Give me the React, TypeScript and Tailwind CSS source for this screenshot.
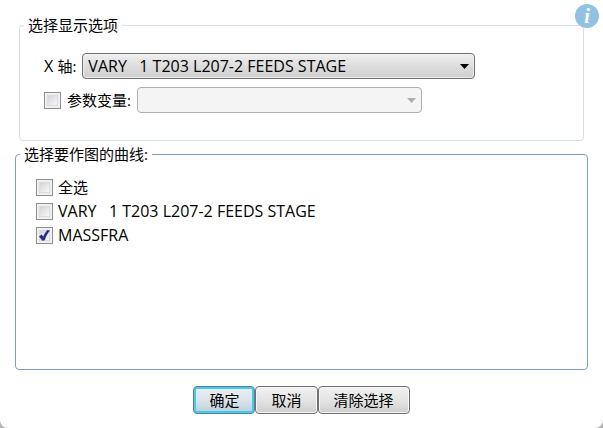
import { useState } from "react";
import type { ReactNode, SelectHTMLAttributes } from "react";

const VARY = "VARY\u00a0\u00a0\u00a01 T203 L207-2 FEEDS STAGE";

type CheckProps = {
  id: string;
  checked: boolean;
  onChange: (value: boolean) => void;
};

function CheckBox({ id, checked, onChange }: CheckProps) {
  return (
    <span className="relative grid size-[17px] shrink-0 place-items-center border border-[#8e8f8f] bg-[#f0f0f0]">
      <input
        id={id}
        type="checkbox"
        checked={checked}
        onChange={(e) => onChange(e.target.checked)}
        className="size-[11px] appearance-none border border-[#d8dadd] bg-linear-to-br from-[#d0d4dc] to-[#f8f8f8]"
      />
      {checked && (
        <svg viewBox="0 0 11 11" className="pointer-events-none absolute size-[11px]" aria-hidden="true">
          <path d="M0 6.4 L2.6 4.4 L4.2 6.6 C5.4 4 6.8 1.6 8.4 0 L11 0.6 C8.8 3 7 6.4 5.8 10.2 L3.4 10.8 Z" fill="#2a2f83" />
        </svg>
      )}
    </span>
  );
}

type ComboProps = SelectHTMLAttributes<HTMLSelectElement> & { children?: ReactNode };

function Combo({ children, className, disabled, ...rest }: ComboProps) {
  return (
    <span className={`relative flex h-[26px] min-w-0 ${className}`}>
      <select
        disabled={disabled}
        className="w-full appearance-none rounded-[4px] border border-[#707070] bg-linear-to-b from-[#f0f0f0] from-0% via-[#dddddd] via-50% to-[#cfcfcf] pr-6 pl-[5px] text-base text-black shadow-[inset_0_0_0_1px_#f3f3f3cc] disabled:border-[#adb2b5] disabled:bg-[#f4f4f4] disabled:bg-none disabled:opacity-100"
        {...rest}
      >
        {children}
      </select>
      <svg
        viewBox="0 0 9 5"
        className={`pointer-events-none absolute top-[11px] right-[6px] h-[5px] w-[9px] ${disabled ? "fill-[#adadad]" : "fill-black"}`}
        aria-hidden="true"
      >
        <path d="M0 0 H9 L4.5 5 Z" />
      </svg>
    </span>
  );
}

function PushButton({ children, primary }: { children: ReactNode; primary?: boolean }) {
  return (
    <button
      type="button"
      className={`h-7 rounded-[4px] border px-[15px] ${
        primary
          ? "border-[#5f7f8c] bg-linear-to-b from-[#ebf0f3] from-0% via-[#dae4ea] via-50% to-[#bccfdc] shadow-[inset_0_0_0_2px_#3fcbf5]"
          : "border-[#707070] bg-linear-to-b from-[#f2f2f2] from-0% via-[#e4e4e4] via-50% to-[#cfcfcf] shadow-[inset_0_0_0_1px_#f7f7f7]"
      }`}
    >
      {children}
    </button>
  );
}

export default function App() {
  const [param, setParam] = useState(false);
  const [curves, setCurves] = useState([
    { id: "all", label: "全选", checked: false },
    { id: "vary", label: VARY, checked: false },
    { id: "massfra", label: "MASSFRA", checked: true },
  ]);

  const toggle = (id: string, checked: boolean) =>
    setCurves((list) => list.map((c) => (c.id === id || id === "all" ? { ...c, checked } : c)));

  return (
    <div className="min-h-screen bg-[#b4b4b4] font-['Open_Sans','Noto_Sans_CJK_SC',sans-serif] text-[15px] leading-5 text-black">
      <main className="relative flex min-h-screen flex-col rounded-b-[8px] bg-white px-[15px] pt-[15px] pb-[14px]">
        <fieldset className="mx-1 rounded-[4px] border border-[#d5dfe5] px-6 pb-[27px]">
          <legend className="-ml-5 px-1">选择显示选项</legend>
          <div className="flex flex-col gap-2 pt-[18px]">
            <div className="flex items-center gap-[6px]">
              <label htmlFor="x-axis" className="shrink-0 text-base leading-5">
                X <span className="text-[15px]">轴:</span>
              </label>
              <Combo id="x-axis" className="w-[393px]">
                <option>{VARY}</option>
              </Combo>
            </div>
            <div className="flex items-center gap-[6px]">
              <CheckBox id="param" checked={param} onChange={setParam} />
              <label htmlFor="param" className="shrink-0">参数变量:</label>
              <Combo aria-label="参数变量" className="w-[285px]" disabled={!param} />
            </div>
          </div>
        </fieldset>

        <fieldset className="mt-[3px] grow rounded-[4px] border border-[#7c9dbf] px-5">
          <legend className="-ml-4 px-1">选择要作图的曲线:</legend>
          <ul className="flex flex-col gap-1 pt-[13px]">
            {curves.map((c) => (
              <li key={c.id} className="flex items-center gap-[5px]">
                <CheckBox id={c.id} checked={c.checked} onChange={(v) => toggle(c.id, v)} />
                <label htmlFor={c.id} className={c.id === "all" ? "" : "text-base leading-5"}>
                  {c.label}
                </label>
              </li>
            ))}
          </ul>
        </fieldset>

        <div className="mt-4 flex justify-center">
          <PushButton primary>确定</PushButton>
          <PushButton>取消</PushButton>
          <PushButton>清除选择</PushButton>
        </div>

        <button
          type="button"
          aria-label="帮助"
          className="absolute top-1 right-1 size-6 rounded-full bg-[#91c1e3] font-['Liberation_Serif',serif] text-xl leading-6 font-bold text-white italic"
        >
          i
        </button>
      </main>
    </div>
  );
}
